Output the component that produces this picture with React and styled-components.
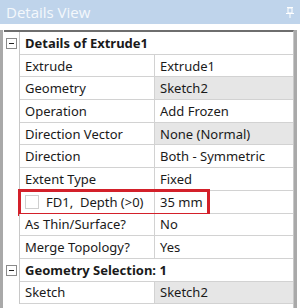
import React from 'react';
import styled, { createGlobalStyle } from 'styled-components';

const GlobalStyle = createGlobalStyle`
  html, body {
    margin: 0;
    padding: 0;
    background: #ffffff;
  }
  body {
    font-family: "Noto Sans", "Open Sans", sans-serif;
    font-size: 13px;
    color: #1a1a1a;
  }
`;

const Window = styled.div`
  width: 300px;
  height: 308px;
  overflow: hidden;
  background: #ffffff;
`;

const TitleBar = styled.div`
  height: 24px;
  background: #bfd4eb;
  display: flex;
  align-items: center;
  justify-content: space-between;
  padding: 0 6px 0 6px;
`;

const Title = styled.span`
  color: #f4f8fc;
  font-family: "Open Sans", "Noto Sans", sans-serif;
  font-size: 15px;
`;

const Body = styled.div`
  display: flex;
  height: 284px;
  padding-top: 6px;
  box-sizing: border-box;
`;

const SideBar = styled.div`
  width: 3px;
  background: #a9a9a9;
  flex: none;
`;

const Grid = styled.div`
  width: 289px;
  margin-left: 1px;
  border-top: 2px solid #6e6e6e;
  border-right: 1px solid #c8c8c8;
  display: flex;
  flex-direction: column;
  flex: none;
`;

const Row = styled.div`
  position: relative;
  display: grid;
  grid-template-columns: 16px 135px 1fr;
  height: 22.7px;
`;

const TreeCell = styled.div`
  border-right: 1px solid #c8c8c8;
  display: flex;
  align-items: center;
  justify-content: center;
`;

const Cell = styled.div`
  display: flex;
  align-items: center;
  padding-left: 5px;
  border-bottom: 1px solid #d2d2d2;
  border-right: ${p => (p.$last ? 'none' : '1px solid #d2d2d2')};
  background: ${p => (p.$shaded ? '#e6e6e6' : '#ffffff')};
  white-space: nowrap;
  overflow: hidden;
`;

const HeaderCell = styled(Cell)`
  grid-column: 2 / 4;
  font-weight: 700;
  border-right: none;
`;

const Collapse = styled.span`
  width: 9px;
  height: 9px;
  border: 1px solid #8a8a8a;
  position: relative;
  background: #fff;
  &::after {
    content: '';
    position: absolute;
    left: 2px;
    right: 2px;
    top: 4px;
    height: 1px;
    background: #222;
  }
`;

const CheckBox = styled.span`
  width: 12px;
  height: 12px;
  border: 1px solid #cfcfcf;
  margin-right: 7px;
  background: #fff;
`;

const Highlight = styled.div`
  position: absolute;
  left: 14px;
  top: -2px;
  width: 186px;
  height: 21px;
  border: 3px solid #d3202a;
  pointer-events: none;
`;

const PinIcon = () => (
  <svg width="8" height="11" viewBox="0 0 8 11">
    <rect x="1" y="0" width="6" height="1" fill="#fff" />
    <rect x="2" y="1" width="4" height="5" fill="none" stroke="#fff" strokeWidth="1" />
    <rect x="0" y="6" width="8" height="1" fill="#fff" />
    <rect x="3.5" y="7" width="1" height="4" fill="#fff" />
  </svg>
);

const sections = [
  {
    title: 'Details of Extrude1',
    rows: [
      { name: 'Extrude', value: 'Extrude1' },
      { name: 'Geometry', value: 'Sketch2', shaded: true },
      { name: 'Operation', value: 'Add Frozen' },
      { name: 'Direction Vector', value: 'None (Normal)', shaded: true },
      { name: 'Direction', value: 'Both - Symmetric' },
      { name: 'Extent Type', value: 'Fixed' },
      { name: 'FD1,  Depth (>0)', value: '35 mm', check: true, highlight: true },
      { name: 'As Thin/Surface?', value: 'No' },
      { name: 'Merge Topology?', value: 'Yes' },
    ],
  },
  {
    title: 'Geometry Selection: 1',
    rows: [{ name: 'Sketch', value: 'Sketch2', shaded: true }],
  },
];

const App = () => (
  <Window>
    <GlobalStyle />
    <TitleBar>
      <Title>Details View</Title>
      <PinIcon />
    </TitleBar>
    <Body>
      <SideBar />
      <Grid>
        {sections.map(section => (
          <React.Fragment key={section.title}>
            <Row>
              <TreeCell>
                <Collapse />
              </TreeCell>
              <HeaderCell>{section.title}</HeaderCell>
            </Row>
            {section.rows.map(row => (
              <Row key={row.name}>
                <TreeCell />
                <Cell>
                  {row.check && <CheckBox />}
                  <span style={{ whiteSpace: 'pre' }}>{row.name}</span>
                </Cell>
                <Cell $last $shaded={row.shaded}>{row.value}</Cell>
                {row.highlight && <Highlight />}
              </Row>
            ))}
          </React.Fragment>
        ))}
      </Grid>
      <SideBar />
    </Body>
  </Window>
);

export default App;
